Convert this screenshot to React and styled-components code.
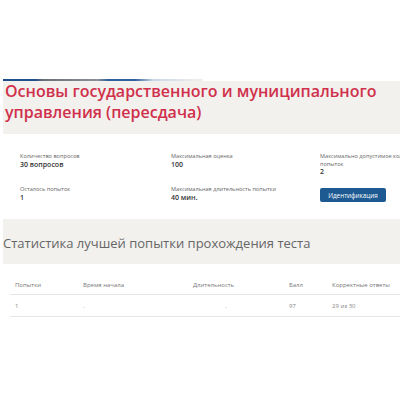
import React from 'react';
import styled, { createGlobalStyle } from 'styled-components';

const GlobalStyle = createGlobalStyle`
    html, body {
        margin: 0;
        padding: 0;
        background: #fff;
        overflow: hidden;
    }
    body {
        font-family: "Open Sans", "Liberation Sans", sans-serif;
    }
`;

const Page = styled.div`
    width: 400px;
    height: 400px;
    padding-top: 79px;
    box-sizing: border-box;
    overflow: hidden;
`;

const Banner = styled.div`
    margin-left: 3px;
    height: 2px;
    width: 200px;
    background: linear-gradient(
        to right,
        #1f4e8c 0px,
        #1f4e8c 32px,
        #6b6f78 40px,
        #8a8f98 95px,
        #2f5f9c 105px,
        #2f5f9c 132px,
        #c9d6e6 150px,
        #f2f1ee 200px
    );
`;

const Main = styled.div`
    margin-left: 3px;
    background: #f2f1ee;
    height: 241px;
    box-sizing: border-box;
    overflow: hidden;
`;

const Title = styled.h1`
    margin: 0;
    padding-left: 2px;
    font-size: 16px;
    line-height: 21px;
    font-weight: 600;
    color: #d0304b;
`;

const Card = styled.div`
    background: #fff;
    width: 460px;
    margin-top: ${(p) => p.$top || 0}px;
    padding: ${(p) => p.$pad || '0'};
    box-sizing: border-box;
`;

const InfoGrid = styled.div`
    display: grid;
    grid-template-columns: 151px 149px 110px;
    row-gap: 10px;
`;

const Field = styled.div`
    display: flex;
    flex-direction: column;
    min-height: 22px;
`;

const Label = styled.span`
    font-size: 5.6px;
    line-height: 7.5px;
    color: #666;
`;

const Value = styled.span`
    font-size: 7px;
    line-height: 8px;
    color: #333;
    font-weight: 600;
`;

const Button = styled.button`
    align-self: flex-start;
    border: none;
    background: #1d5a92;
    color: #fff;
    font-family: inherit;
    font-size: 6.3px;
    border-radius: 2px;
    width: 66px;
    height: 14px;
    padding: 0;
    margin-top: 2px;
`;

const Heading = styled.h2`
    margin: 14px 0 0;
    font-size: 13px;
    line-height: 20px;
    font-weight: 400;
    color: #666;
`;

const Table = styled.div`
    margin-left: 7px;
`;

const Row = styled.div`
    display: grid;
    grid-template-columns: 68px 110px 96px 43px 1fr;
    align-items: center;
    height: ${(p) => p.$h}px;
    border-bottom: 1px solid #e6e6e6;
    padding-left: 5px;
`;

const Cell = styled.span`
    font-size: 6px;
    color: ${(p) => (p.$head ? '#777' : '#888')};
    white-space: nowrap;
    text-align: ${(p) => (p.$center ? 'center' : 'left')};
    padding-right: ${(p) => (p.$center ? '30px' : '0')};
`;

const info = [
    { label: 'Количество вопросов', value: '30 вопросов' },
    { label: 'Максимальная оценка', value: '100' },
    { label: 'Максимально допустимое количество попыток', value: '2' },
    { label: 'Осталось попыток', value: '1' },
    { label: 'Максимальная длительность попытки', value: '40 мин.' },
];

const App = () => {
    return (
        <Page>
            <GlobalStyle />
            <Banner />
            <Main>
                <Title>
                    Основы государственного и муниципального
                    <br />
                    управления (пересдача)
                </Title>
                <Card $top={11} $pad="19px 0 11px 17px">
                    <InfoGrid>
                        {info.map((f) => (
                            <Field key={f.label}>
                                <Label>{f.label}</Label>
                                <Value>{f.value}</Value>
                            </Field>
                        ))}
                        <Field>
                            <Button>Идентификация</Button>
                        </Field>
                    </InfoGrid>
                </Card>
                <Heading>Статистика лучшей попытки прохождения теста</Heading>
                <Card $top={11} $pad="12px 0 6px 0">
                    <Table>
                        <Row $h={18}>
                            <Cell $head>Попытки</Cell>
                            <Cell $head>Время начала</Cell>
                            <Cell $head>Длительность</Cell>
                            <Cell $head>Балл</Cell>
                            <Cell $head>Корректные ответы</Cell>
                        </Row>
                        <Row $h={21}>
                            <Cell>1</Cell>
                            <Cell>.</Cell>
                            <Cell $center>.</Cell>
                            <Cell>97</Cell>
                            <Cell>29 из 30</Cell>
                        </Row>
                    </Table>
                </Card>
            </Main>
        </Page>
    );
};

export default App;
